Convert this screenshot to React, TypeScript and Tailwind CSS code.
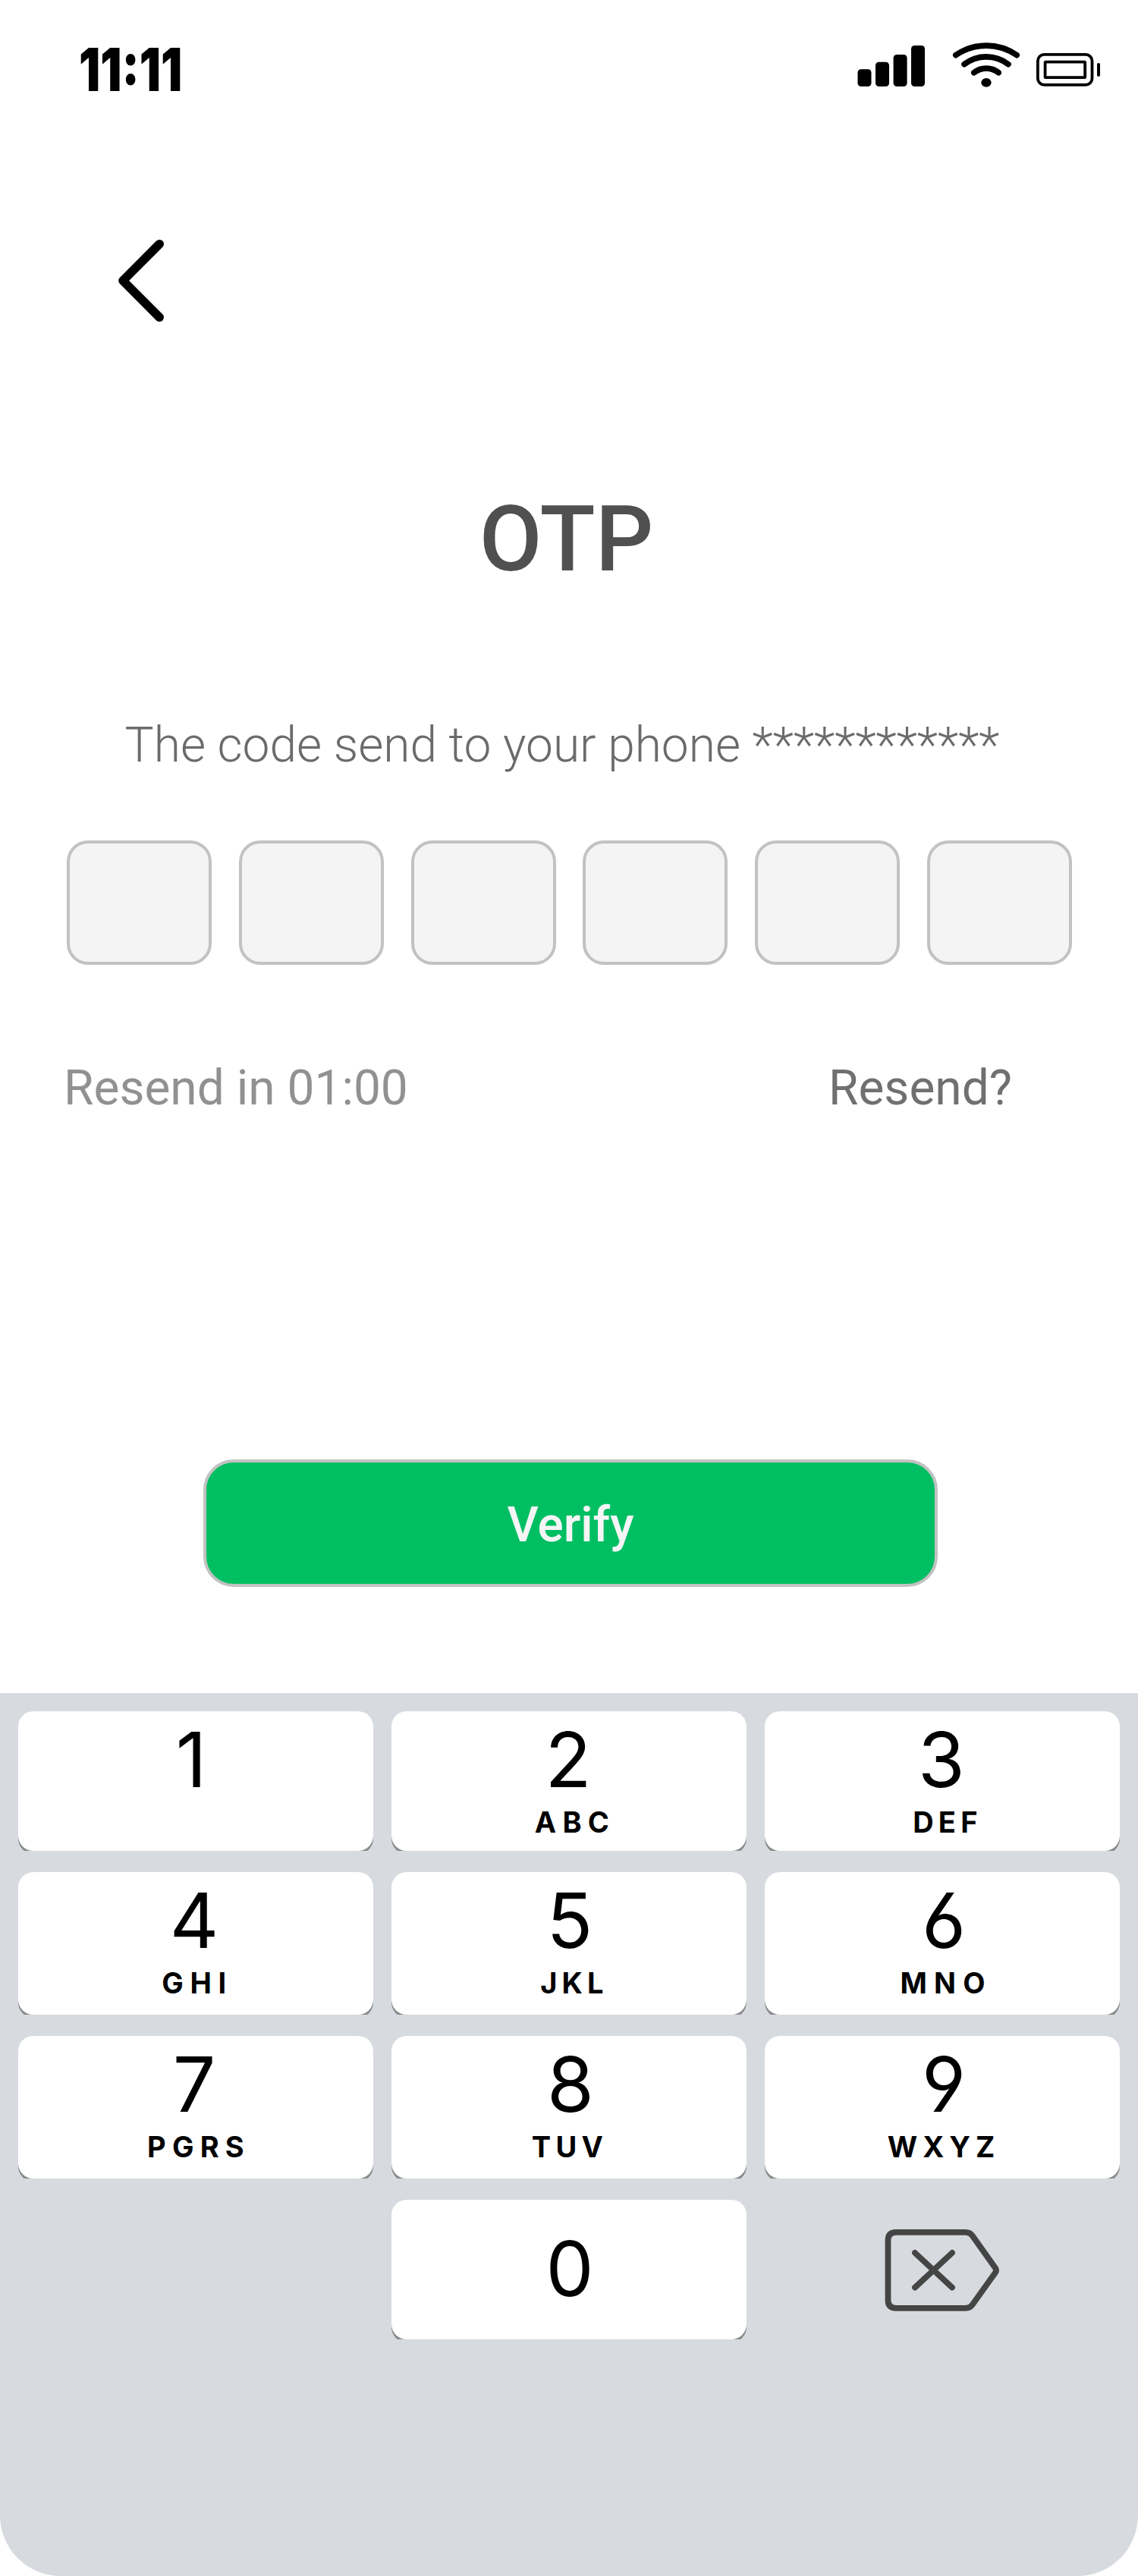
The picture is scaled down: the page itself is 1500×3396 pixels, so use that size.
type KeyData = {
  digit: string;
  shift: string;
  label?: string;
  labelClass?: string;
};

const ROWS: { height: string; keys: KeyData[] }[] = [
  {
    height: "h-[184px]",
    keys: [
      { digit: "1", shift: "-translate-x-[6px]" },
      { digit: "2", shift: "-translate-x-[1px]", label: "ABC", labelClass: "tracking-[8.3px] translate-x-[8px]" },
      { digit: "3", shift: "-translate-x-[1px]", label: "DEF", labelClass: "tracking-[6.3px] translate-x-[7px]" },
    ],
  },
  {
    height: "h-[188px]",
    keys: [
      { digit: "4", shift: "-translate-x-[2px]", label: "GHI", labelClass: "tracking-[8.6px] translate-x-[2px]" },
      { digit: "5", shift: "translate-x-[1px]", label: "JKL", labelClass: "tracking-[6.2px] translate-x-[7px]" },
      { digit: "6", shift: "translate-x-[2px]", label: "MNO", labelClass: "tracking-[9.2px] translate-x-[5px]" },
    ],
  },
  {
    height: "h-[188px]",
    keys: [
      { digit: "7", shift: "-translate-x-[2px]", label: "PGRS", labelClass: "tracking-[8.2px] translate-x-[4px]" },
      { digit: "8", shift: "translate-x-[2px]", label: "TUV", labelClass: "tracking-[6.4px] translate-x-[1px]" },
      { digit: "9", shift: "translate-x-[2px]", label: "WXYZ", labelClass: "tracking-[7px] translate-x-[2px]" },
    ],
  },
];

function Key({ data, height, pad = "pt-[14px]" }: { data: KeyData; height: string; pad?: string }) {
  return (
    <div className={`overflow-hidden ${height}`}>
      <button
        type="button"
        className={`flex h-full w-full flex-col items-center justify-start rounded-[20px] bg-white text-black shadow-[0_4px_0_#898a8b] ${pad}`}
      >
        <span
          className={`block text-[100px] leading-[100px] font-normal [font-feature-settings:'cv03','cv04'] ${data.shift}`}
        >
          {data.digit}
        </span>
        {data.label && (
          <span className={`mt-[12px] block text-[38px] leading-[40px] font-bold ${data.labelClass}`}>
            {data.label}
          </span>
        )}
      </button>
    </div>
  );
}

function SignalIcon() {
  return (
    <svg width="90" height="62" viewBox="1130 54 90 62" fill="#000">
      <rect x="1130.5" y="91.3" width="18" height="22.7" rx="4.5" />
      <rect x="1154" y="81.7" width="18" height="32.3" rx="4.5" />
      <rect x="1177.6" y="72" width="18" height="42" rx="4.5" />
      <rect x="1201" y="60" width="18" height="54" rx="4.5" />
    </svg>
  );
}

function WifiIcon() {
  return (
    <svg width="90" height="62" viewBox="1255 54 90 62" fill="none" stroke="#000" strokeWidth="7.6" strokeLinecap="round">
      <path d="M1259.8 72.7A70.6 70.6 0 0 1 1340.2 72.7" />
      <path d="M1271 84.7A47.6 47.6 0 0 1 1329 84.7" />
      <path d="M1283.8 95.8A26 26 0 0 1 1316.2 95.8" />
      <ellipse cx="1300" cy="108.8" rx="6.7" ry="5.9" fill="#000" stroke="none" />
    </svg>
  );
}

function BatteryIcon() {
  return (
    <svg width="86" height="62" viewBox="1365 54 86 62" fill="none" stroke="#000" strokeWidth="3.8">
      <rect x="1367.9" y="71.9" width="71.6" height="40" rx="8.5" />
      <rect x="1377.6" y="81.6" width="52.6" height="20.6" rx="1" />
      <rect x="1446" y="83" width="4" height="18" rx="2" fill="#000" stroke="none" />
    </svg>
  );
}

function BackspaceIcon() {
  return (
    <svg
      width="152"
      height="112"
      viewBox="1165 2937 152 112"
      fill="none"
      stroke="#454545"
      strokeWidth="7.8"
      strokeLinecap="round"
      strokeLinejoin="round"
    >
      <path d="M1180 2942.8H1272Q1277.6 2942.8 1280.6 2947.2L1311 2990Q1313 2993 1311 2996L1280.6 3038.6Q1277.6 3042.8 1272 3042.8H1180Q1169.5 3042.8 1169.5 3032.6V2953.5Q1169.5 2942.8 1180 2942.8Z" />
      <path d="M1205 2970L1254 3015.6M1254 2970L1205 3015.6" />
    </svg>
  );
}

export default function App() {
  return (
    <main className="flex h-[3396px] w-[1500px] flex-col overflow-hidden bg-white font-['Roboto',sans-serif]">
      <header className="flex h-[150px] items-start justify-between pr-[49px] pl-[104px]">
        <time className="mt-[52px] block origin-left scale-x-[0.8] font-['Inter',sans-serif] text-[78px] leading-[80px] font-black text-black">
          11:11
        </time>
        <div className="mt-[54px] flex">
          <SignalIcon />
          <div className="mr-[20px] ml-[35px]">
            <WifiIcon />
          </div>
          <BatteryIcon />
        </div>
      </header>

      <button type="button" aria-label="Back" className="mt-[164px] ml-[154px] h-[112px] w-[64px]">
        <svg width="64" height="112" viewBox="154 314 64 112" fill="none" stroke="#000" strokeWidth="11.6" strokeLinecap="round" strokeLinejoin="round">
          <path d="M210.2 321.7L162 370L210.2 418.3" />
        </svg>
      </button>

      <h1 className="mt-[215px] mr-[7px] text-center text-[120px] leading-[140px] font-medium text-[#505050]">OTP</h1>
      <p className="mt-[162px] mr-[18px] text-center text-[64px] leading-[80px] font-light whitespace-nowrap text-[#6b6b6b]">
        The code send to your phone ************
      </p>

      <div className="mt-[85px] flex justify-between pr-[87px] pl-[88px]">
        {[0, 1, 2, 3, 4, 5].map((i) => (
          <div key={i} className="h-[164px] w-[191px] rounded-[28px] border-4 border-[#c2c2c2] bg-[#f4f4f4]" />
        ))}
      </div>

      <div className="mt-[123px] flex justify-between pr-[166px] pl-[84px] text-[64px] leading-[80px]">
        <span className="text-[#919191]">Resend in 01:00</span>
        <button type="button" className="text-[#707070]">Resend?</button>
      </div>

      <button
        type="button"
        className="mt-[449px] ml-[268px] flex h-[168px] w-[968px] items-center justify-center rounded-[40px] border-4 border-[#c2c2c2] bg-[#00bf63] pt-[5px] text-[64px] leading-[80px] font-medium text-[#f5f5f5]"
      >
        Verify
      </button>

      <section className="mt-[140px] flex h-[1164px] flex-col gap-[28px] rounded-b-[80px] bg-[#d7dadf] px-[24px] pt-[24px] font-['Inter',sans-serif]">
        {ROWS.map((row) => (
          <div key={row.keys[0].digit} className="grid grid-cols-3 gap-[24px]">
            {row.keys.map((k) => (
              <Key key={k.digit} data={k} height={row.height} />
            ))}
          </div>
        ))}
        <div className="grid grid-cols-3 gap-[24px]">
          <div />
          <Key data={{ digit: "0", shift: "translate-x-[1px]" }} height="h-[184px]" pad="pt-[41px]" />
          <button type="button" aria-label="Delete" className="flex items-center justify-center pt-[2px]">
            <BackspaceIcon />
          </button>
        </div>
      </section>
    </main>
  );
}
